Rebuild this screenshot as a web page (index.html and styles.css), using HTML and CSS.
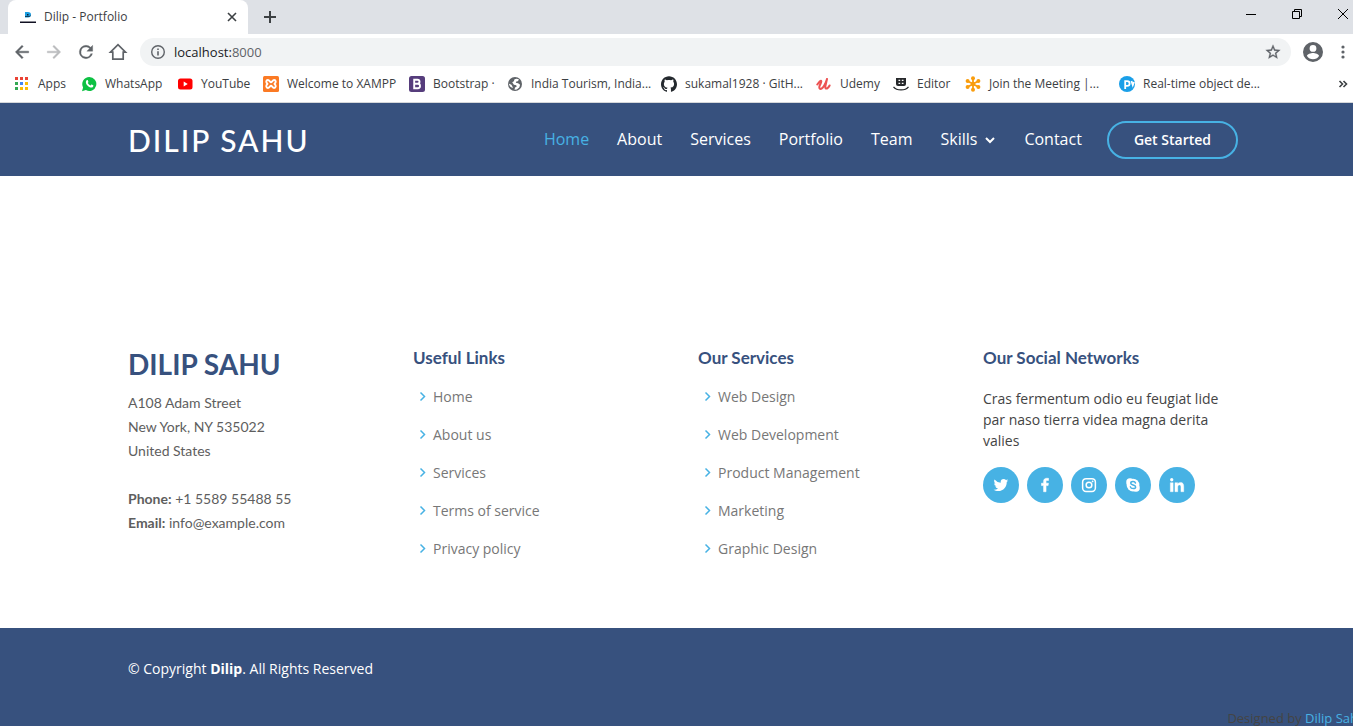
FILE: index.html
```html
<!DOCTYPE html>
<html lang="en">
<head>
<meta charset="utf-8">
<title>Dilip - Portfolio</title>
<link rel="stylesheet" href="styles.css">
</head>
<body>
<div class="browser">
  <div class="tabstrip">
    <div class="tab">
      <svg class="favicon" viewBox="0 0 16 16"><path fill="#1b9de0" d="M5 3h3q3 0 3 2.700t-3 2.700H5z"/><path fill="#123" d="M7 5h1.500v1.500H7zM5 8h3.500q2.500-.3 2.500-2.500-.5 1.500-2.500 1.700H5z"/><path fill="#112" d="M0 12.500h16V14H0z"/></svg>
      <span class="tab-title">Dilip - Portfolio</span>
      <button class="icon-button" aria-label="Close tab"><svg class="icon-12" viewBox="0 0 12 12"><path d="M2 2l8 8M10 2l-8 8" stroke="#3c4043" stroke-width="1.600"/></svg></button>
    </div>
    <button class="icon-button new-tab" aria-label="New tab"><svg class="icon-14" viewBox="0 0 14 14"><path d="M7 1v12M1 7h12" stroke="#3c4043" stroke-width="2"/></svg></button>
    <div class="window-controls">
      <button class="icon-button" aria-label="Minimize"><svg class="icon-12" viewBox="0 0 12 12"><path d="M1 6.500h10" stroke="#000"/></svg></button>
      <button class="icon-button" aria-label="Restore"><svg class="icon-12" viewBox="0 0 12 12"><path d="M1.500 3.500h7v7h-7zM3.500 3.500v-2h7v7h-2" fill="none" stroke="#000"/></svg></button>
      <button class="icon-button" aria-label="Close window"><svg class="icon-12" viewBox="0 0 12 12"><path d="M1 1l10 10M11 1L1 11" stroke="#000"/></svg></button>
    </div>
  </div>
  <div class="toolbar">
    <button class="icon-button" aria-label="Back"><svg class="icon-20" viewBox="0 0 24 24"><path fill="#5f6368" stroke="#5f6368" stroke-width=".5" d="M20 11H7.830l5.590-5.590L12 4l-8 8 8 8 1.410-1.410L7.830 13H20z"/></svg></button>
    <button class="icon-button" aria-label="Forward"><svg class="icon-20" viewBox="0 0 24 24"><path fill="#babcbe" stroke="#babcbe" stroke-width=".5" d="M12 4l-1.410 1.410L16.170 11H4v2h12.170l-5.580 5.590L12 20l8-8z"/></svg></button>
    <button class="icon-button" aria-label="Reload"><svg class="icon-20" viewBox="0 0 24 24"><path fill="#5f6368" d="M17.650 6.350A7.960 7.960 0 0 0 12 4a8 8 0 1 0 7.730 10h-2.080A6 6 0 1 1 12 6c1.660 0 3.140.69 4.220 1.780L13 11h7V4z" stroke="#5f6368" stroke-width=".4"/></svg></button>
    <button class="icon-button" aria-label="Home page"><svg class="icon-20" viewBox="0 0 20 20"><path fill="none" stroke="#5f6368" stroke-width="1.700" d="M2.500 10.200L10 2.700l7.500 7.500h-2.300v6.900H4.800v-6.900z"/></svg></button>
    <div class="address-bar">
      <svg class="icon-16" viewBox="0 0 16 16"><circle cx="8" cy="8" r="6.300" fill="none" stroke="#5f6368" stroke-width="1.400"/><path fill="#5f6368" d="M7.200 7.200h1.600v4.300H7.200zM7.200 4.500h1.600V6H7.200z"/></svg>
      <span class="url">localhost:<span class="port">8000</span></span>
      <button class="icon-button" aria-label="Bookmark this page"><svg class="icon-16" viewBox="1 1 22 22"><path fill="#5f6368" stroke="#5f6368" stroke-width=".4" d="M22 9.240l-7.190-.62L12 2 9.190 8.630 2 9.240l5.460 4.730L5.820 21 12 17.270 18.180 21l-1.630-7.030zM12 15.400l-3.760 2.270 1-4.280-3.320-2.880 4.380-.38L12 6.100l1.710 4.040 4.380.38-3.320 2.880 1 4.280z"/></svg></button>
    </div>
    <button class="icon-button" aria-label="Profile"><svg class="icon-20" viewBox="2 2 20 20"><path fill="#5f6368" d="M12 2a10 10 0 1 0 0 20 10 10 0 0 0 0-20zm0 3a3.400 3.400 0 1 1 0 6.800A3.400 3.400 0 0 1 12 5zm0 14.200a7.200 7.200 0 0 1-6-3.220c.03-1.990 4-3.080 6-3.080s5.970 1.090 6 3.080a7.200 7.200 0 0 1-6 3.220z"/></svg></button>
    <button class="icon-button menu-button" aria-label="Menu"><svg class="icon-16" viewBox="0 0 16 16"><g fill="#5f6368"><circle cx="8" cy="3" r="1.600"/><circle cx="8" cy="8" r="1.600"/><circle cx="8" cy="13" r="1.600"/></g></svg></button>
  </div>
  <nav class="bookmarks" aria-label="Bookmarks">
    <a href="#"><svg class="icon-16" viewBox="0 0 16 16"><path fill="#ea4335" d="M1 1h3v3H1zM6 1h3v3H6zM11 1h3v3h-3z"/><path fill="#34a853" d="M1 6h3v3H1zM1 11h3v3H1z"/><path fill="#4285f4" d="M6 6h3v3H6z"/><path fill="#fbbc05" d="M11 6h3v3h-3zM6 11h3v3H6zM11 11h3v3h-3z"/></svg>Apps</a>
    <a href="#"><svg class="icon-16" viewBox="0 0 16 16"><path fill="#0dc143" d="M8.300 1a7 7 0 1 1-3.400 13.100L1 15.200l1.100-3.800A7 7 0 0 1 8.300 1z"/><path fill="#fff" d="M5.600 4.300c.5-.5 1-.4 1.200 0l.6 1.500c.1.400-.5.900-.6 1.200.7 1.200 1.500 1.900 2.700 2.400.4-.2.800-1 1.200-.9l1.500.8c.5.300 0 1.500-.6 1.900-1.200.8-3 .1-4.700-1.300C5.200 8.500 4.100 6 5.600 4.300z"/></svg>WhatsApp</a>
    <a href="#"><svg class="icon-16" viewBox="0 0 16 16"><rect x="1" y="2.500" width="14.500" height="11" rx="2.500" fill="#f00"/><path fill="#fff" d="M6.700 5.600l4 2.400-4 2.400z"/></svg>YouTube</a>
    <a href="#"><svg class="icon-16" viewBox="0 0 16 16"><rect width="16" height="16" rx="1.500" fill="#fb7a24"/><path fill="none" stroke="#fff" stroke-width="1.900" stroke-linejoin="round" d="M4.500 7.900C2.600 6.600 3 4 4.900 4 6.500 4 7 6.200 8 6.200S9.500 4 11.100 4c1.900 0 2.300 2.600.4 3.900 1.900 1.400 1.500 4.100-.4 4.100C9.500 12 9 9.800 8 9.800S6.500 12 4.900 12C3 12 2.600 9.300 4.500 7.900z"/></svg>Welcome to XAMPP</a>
    <a href="#"><svg class="icon-16" viewBox="0 0 16 16"><rect width="16" height="16" rx="2.500" fill="#563d7c"/><path fill="none" stroke="#fff" stroke-width="1.900" d="M5.200 3.700h3.300q2 0 2 2T8.500 7.800H5.200zM5.200 7.800h3.600q2.200 0 2.200 2.200t-2.200 2.200H5.200z"/></svg>Bootstrap ·</a>
    <a href="#"><svg class="icon-16" viewBox="0 0 16 16"><circle cx="8" cy="8" r="7" fill="#5f6368"/><path fill="#fff" d="M7.500 3.200q2.500-1 4.500.3l-1.200 1.700-1.500.2-.5 1.400 2.300.4 2 1.600-.8 2.600-2.500 2-2.300.3.500-2.200 1.600-.8-.3-1.400-2.400-.6-1.700-2.500 1.700-1zM1.700 7.500l2.700 1.300 1.400 2.500-.3.800L3 10.500z"/></svg>India Tourism, India...</a>
    <a href="#"><svg class="icon-16" viewBox="0 0 24 24"><path fill="#24292e" d="M12 .297c-6.630 0-12 5.373-12 12 0 5.303 3.438 9.800 8.205 11.385.6.113.82-.258.82-.577 0-.285-.01-1.040-.015-2.040-3.338.724-4.042-1.610-4.042-1.610C4.422 18.070 3.633 17.700 3.633 17.700c-1.087-.744.084-.729.084-.729 1.205.084 1.838 1.236 1.838 1.236 1.070 1.835 2.809 1.305 3.495.998.108-.776.417-1.305.76-1.605-2.665-.3-5.466-1.332-5.466-5.930 0-1.310.465-2.380 1.235-3.220-.135-.303-.54-1.523.105-3.176 0 0 1.005-.322 3.300 1.230.96-.267 1.980-.399 3-.405 1.020.006 2.040.138 3 .405 2.280-1.552 3.285-1.230 3.285-1.230.645 1.653.24 2.873.12 3.176.765.840 1.230 1.910 1.230 3.220 0 4.610-2.805 5.625-5.475 5.920.42.360.81 1.096.81 2.220 0 1.606-.015 2.896-.015 3.286 0 .315.210.69.825.57C20.565 22.092 24 17.592 24 12.297c0-6.627-5.373-12-12-12"/></svg>sukamal1928 · GitH...</a>
    <a href="#"><svg class="icon-16" viewBox="0 0 16 16"><path fill="none" stroke="#ec5252" stroke-width="2" stroke-linecap="round" stroke-linejoin="round" d="M1.300 8.500Q4 4.500 5 4.700T3.500 10q-.6 3 1 2.900Q7 12.600 9.300 7.500L11 3 9.400 10Q9 13 11 12.500q1.600-.8 2.600-3"/></svg>Udemy</a>
    <a href="#"><svg class="icon-16" viewBox="0 0 16 16"><path fill="#26282b" d="M3 2h10v6q0 2-2 2H5Q3 10 3 8z"/><path fill="#fff" d="M5.500 3.800h1.700V5H5.500zM8.800 3.800h1.700V5H8.800zM5.500 6.800h1.700V8H5.500zM8.800 6.800h1.700V8H8.800z"/><path fill="none" stroke="#26282b" stroke-width="1.300" d="M.5 10.800Q3 13.900 8 13.900t7.500-3.100"/></svg>Editor</a>
    <a href="#"><svg class="icon-16" viewBox="0 0 16 16"><path stroke="#f99d0e" stroke-width="1.800" d="M8 2v12M2.500 5l11 6M2.500 11l11-6"/><g fill="#f99d0e"><circle cx="8" cy="2.200" r="2"/><circle cx="8" cy="13.800" r="2"/><circle cx="2.600" cy="5" r="2"/><circle cx="13.400" cy="5" r="2"/><circle cx="2.600" cy="11" r="2"/><circle cx="13.400" cy="11" r="2"/><circle cx="8" cy="8" r="2.200"/></g></svg>Join the Meeting |...</a>
    <a href="#"><svg class="icon-16" viewBox="0 0 16 16"><circle cx="8" cy="8" r="8" fill="#1a9fe8"/><path fill="none" stroke="#fff" stroke-width="1.800" d="M6.200 13V5.100h2q2.400 0 2.400 2.400T8.200 9.900h-2M12.500 5l1.300 4L15 6"/></svg>Real-time object de...</a>
    <button class="icon-button" aria-label="More bookmarks"><svg class="icon-12" viewBox="0 0 12 12"><path fill="none" stroke="#3c4043" stroke-width="1.600" d="M2.500 3l3 3-3 3M6.500 3l3 3-3 3"/></svg></button>
  </nav>
</div>

<div class="site">
  <header class="header">
    <div class="container header-row">
      <a class="logo" href="#">DILIP SAHU</a>
      <nav class="main-nav">
        <a class="active" href="#">Home</a>
        <a href="#">About</a>
        <a href="#">Services</a>
        <a href="#">Portfolio</a>
        <a href="#">Team</a>
        <a class="drop" href="#">Skills <svg class="icon-12" viewBox="0 0 12 12"><path fill="none" stroke="#fff" stroke-width="2" d="M2 4l4 4 4-4"/></svg></a>
        <a href="#">Contact</a>
      </nav>
      <a class="get-started" href="#">Get Started</a>
    </div>
  </header>

  <main class="main"></main>

  <footer>
    <div class="container footer-columns">
      <section>
        <h3>DILIP SAHU</h3>
        <p class="address">A108 Adam Street<br>New York, NY 535022<br>United States<br><br><strong>Phone:</strong> +1 5589 55488 55<br><strong>Email:</strong> info@example.com</p>
      </section>
      <section>
        <h4>Useful Links</h4>
        <ul class="links">
          <li><svg class="chevron" viewBox="0 0 18 18"><path d="M7.500 5.500l4 4-4 4"/></svg><a href="#">Home</a></li>
          <li><svg class="chevron" viewBox="0 0 18 18"><path d="M7.500 5.500l4 4-4 4"/></svg><a href="#">About us</a></li>
          <li><svg class="chevron" viewBox="0 0 18 18"><path d="M7.500 5.500l4 4-4 4"/></svg><a href="#">Services</a></li>
          <li><svg class="chevron" viewBox="0 0 18 18"><path d="M7.500 5.500l4 4-4 4"/></svg><a href="#">Terms of service</a></li>
          <li><svg class="chevron" viewBox="0 0 18 18"><path d="M7.500 5.500l4 4-4 4"/></svg><a href="#">Privacy policy</a></li>
        </ul>
      </section>
      <section>
        <h4>Our Services</h4>
        <ul class="links">
          <li><svg class="chevron" viewBox="0 0 18 18"><path d="M7.500 5.500l4 4-4 4"/></svg><a href="#">Web Design</a></li>
          <li><svg class="chevron" viewBox="0 0 18 18"><path d="M7.500 5.500l4 4-4 4"/></svg><a href="#">Web Development</a></li>
          <li><svg class="chevron" viewBox="0 0 18 18"><path d="M7.500 5.500l4 4-4 4"/></svg><a href="#">Product Management</a></li>
          <li><svg class="chevron" viewBox="0 0 18 18"><path d="M7.500 5.500l4 4-4 4"/></svg><a href="#">Marketing</a></li>
          <li><svg class="chevron" viewBox="0 0 18 18"><path d="M7.500 5.500l4 4-4 4"/></svg><a href="#">Graphic Design</a></li>
        </ul>
      </section>
      <section>
        <h4>Our Social Networks</h4>
        <p class="social-text">Cras fermentum odio eu feugiat lide par naso tierra videa magna derita valies</p>
        <div class="social-links">
          <a href="#" aria-label="Twitter"><svg viewBox="0 0 24 24"><path d="M19.633 7.997c.013.175.013.349.013.523 0 5.325-4.053 11.461-11.460 11.461-2.282 0-4.402-.661-6.186-1.809.324.037.636.050.973.050a8.070 8.070 0 0 0 5.001-1.721 4.036 4.036 0 0 1-3.767-2.793c.249.037.499.062.761.062.361 0 .724-.050 1.061-.137a4.027 4.027 0 0 1-3.230-3.953v-.050c.537.299 1.160.486 1.820.511a4.022 4.022 0 0 1-1.796-3.354c0-.748.199-1.434.548-2.032a11.457 11.457 0 0 0 8.306 4.215c-.062-.3-.1-.611-.1-.923a4.026 4.026 0 0 1 4.028-4.028c1.160 0 2.207.486 2.943 1.272a7.957 7.957 0 0 0 2.556-.973 4.020 4.020 0 0 1-1.771 2.220 8.073 8.073 0 0 0 2.319-.624 8.645 8.645 0 0 1-2.019 2.083z"/></svg></a>
          <a href="#" aria-label="Facebook"><svg viewBox="0 0 24 24"><path stroke="#fff" stroke-width=".7" d="M13.397 20.997v-8.196h2.765l.411-3.209h-3.176V7.548c0-.926.258-1.560 1.587-1.560h1.684V3.127A22.336 22.336 0 0 0 14.201 3c-2.444 0-4.122 1.492-4.122 4.231v2.355H7.332v3.209h2.753v8.202h3.312z"/></svg></a>
          <a href="#" aria-label="Instagram"><svg viewBox="0 0 24 24"><rect x="3.500" y="3.500" width="17" height="17" rx="4.500" fill="none" stroke="#fff" stroke-width="2"/><circle cx="12" cy="12" r="3.800" fill="none" stroke="#fff" stroke-width="2"/><circle cx="16.800" cy="7.200" r="1.200"/></svg></a>
          <a href="#" aria-label="Skype"><svg viewBox="0 0 24 24"><circle cx="8" cy="8" r="5"/><circle cx="16" cy="16" r="5"/><circle cx="12" cy="12" r="8.500"/><path fill="none" stroke="#47b2e4" stroke-width="2" stroke-linecap="round" d="M15.300 9.300C14.500 6.700 9 6.800 9 9.500c0 3 6.500 1.800 6.500 5 0 3-6 3-7 0"/></svg></a>
          <a href="#" aria-label="LinkedIn"><svg viewBox="0 0 24 24"><circle cx="4.983" cy="5.009" r="2.188"/><path stroke="#fff" stroke-width=".5" d="M9.237 8.855v12.139h3.769v-6.003c0-1.584.298-3.118 2.262-3.118 1.937 0 1.961 1.811 1.961 3.218v5.904H21v-6.657c0-3.270-.704-5.783-4.526-5.783-1.835 0-3.065 1.007-3.568 1.960h-.051v-1.660zM3.095 8.855H6.870v12.139H3.095z"/></svg></a>
        </div>
      </section>
    </div>
    <div class="footer-bottom">
      <div class="container">© Copyright <strong>Dilip</strong>. All Rights Reserved</div>
      <div class="credits">Designed by <a href="#">Dilip Sahu</a></div>
    </div>
  </footer>
</div>
</body>
</html>
```
FILE: styles.css
```css
* { box-sizing: border-box; }
html { overflow: hidden; }
body {
  margin: 0;
  overflow: hidden;
  background: #fff;
  color: #444;
  font: 14px/21px "Open Sans", sans-serif;
}
a { color: inherit; text-decoration: none; }
h3, h4, p, ul { margin: 0; padding: 0; }
svg { display: block; flex: none; }

.icon-12 { width: 12px; height: 12px; }
.icon-14 { width: 14px; height: 14px; }
.icon-16 { width: 16px; height: 16px; }
.icon-20 { width: 20px; height: 20px; }
.icon-button {
  display: block;
  flex: none;
  padding: 0;
  border: 0;
  background: none;
}

/* Browser window */
.browser {
  border-bottom: 1px solid #d5d7da;
  color: #3c4043;
  font-size: 12px;
  line-height: 16px;
}
.tabstrip {
  display: flex;
  align-items: center;
  height: 34px;
  padding-left: 8px;
  background: #dee1e6;
}
.tab {
  display: flex;
  align-items: center;
  gap: 8px;
  width: 240px;
  height: 34px;
  padding: 0 10px 0 12px;
  border-radius: 8px 8px 0 0;
  background: #fff;
}
.favicon { width: 16px; height: 16px; }
.tab-title { flex: 1; }
.new-tab { margin-left: 15px; }
.window-controls {
  display: flex;
  gap: 34px;
  margin: 0 4px 6px auto;
}
.toolbar {
  display: flex;
  align-items: center;
  gap: 12px;
  height: 36px;
  padding: 0 0 0 12px;
}
.address-bar {
  display: flex;
  flex: 1;
  align-items: center;
  gap: 8px;
  height: 28px;
  padding: 0 10px;
  border-radius: 14px;
  background: #f1f3f4;
}
.url { flex: 1; color: #202124; font-size: 13px; }
.port { color: #5f6368; }
.menu-button { margin-right: 2px; }
.bookmarks {
  display: grid;
  grid-template-columns: 67px 96px 86px 146px 98px 154px 155px 77px 72px 154px 1fr auto;
  align-items: center;
  height: 32px;
  padding: 0 4px 4px 14px;
  white-space: nowrap;
}
.bookmarks a { display: flex; align-items: center; gap: 8px; }

/* The site canvas runs on under the window's right edge */
.site { width: calc(100% + 13px); }
.container {
  max-width: 1140px;
  margin: 0 auto;
  padding: 0 15px;
}
.header { background: #37517e; color: #fff; }
.header-row {
  display: flex;
  align-items: center;
  height: 73px;
}
.logo {
  margin-right: auto;
  font: 500 30px/36px Lato, sans-serif;
  letter-spacing: 2px;
}
.main-nav { display: flex; gap: 28px; font-size: 16px; }
.active { color: #47b2e4; }
.drop { display: flex; align-items: center; gap: 7px; }
.get-started {
  margin-left: 25px;
  padding: 7px 25px 8px;
  border: 2px solid #47b2e4;
  border-radius: 50px;
  font-weight: 600;
  line-height: 19px;
}

.main { height: 113px; }
.footer-columns {
  display: grid;
  grid-template-columns: repeat(4, 1fr);
  gap: 30px;
  padding-top: 60px;
  padding-bottom: 61px;
}
h3 {
  margin-bottom: 12px;
  color: #37517e;
  font: 700 28px/30px Lato, sans-serif;
}
h4 {
  margin-bottom: 10px;
  color: #37517e;
  font: 700 17px/18px Lato, sans-serif;
}
.address { color: #5e5e5e; font: 14px/24px Lato, sans-serif; }
.links { list-style: none; color: #777; }
.links li { display: flex; align-items: center; gap: 2px; height: 38px; }
.chevron { width: 18px; height: 18px; fill: none; stroke: #47b2e4; stroke-width: 1.5; }
.social-text { padding-top: 11px; }
.social-links { display: flex; gap: 8px; margin-top: 16px; }
.social-links a {
  display: grid;
  place-items: center;
  width: 36px;
  height: 36px;
  border-radius: 50%;
  background: #47b2e4;
}
.social-links svg { width: 18px; height: 18px; fill: #fff; }
.footer-bottom { padding-top: 30px; background: #37517e; }
.footer-bottom .container { color: #fff; }
.credits { margin-top: 29px; font-size: 13px; text-align: right; }
.credits a { color: #47b2e4; }
```
